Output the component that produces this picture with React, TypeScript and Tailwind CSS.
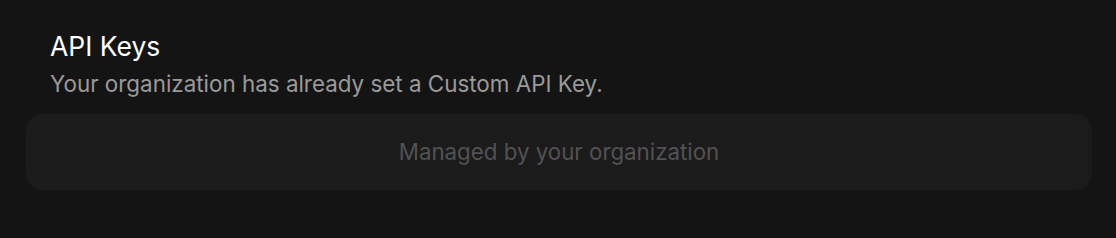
export default function App() {
  return (
    <div className="w-[1116px] h-[238px] bg-[#141414] pl-[26px] pr-[24px] pt-[30px] font-['Inter',sans-serif]">
      <div className="px-6">
        <h2 className="text-[26.5px] leading-[32px] font-normal text-white">API Keys</h2>
        <p className="mt-[8px] text-[22.4px] leading-[28px] text-[#9a9a9a]">
          Your organization has already set a Custom API Key.
        </p>
      </div>
      <div className="mt-[16px] h-[76px] rounded-2xl bg-[#1b1b1b] flex items-center justify-center">
        <span className="text-[22.3px] leading-[28px] text-[#525252]">Managed by your organization</span>
      </div>
    </div>
  )
}
